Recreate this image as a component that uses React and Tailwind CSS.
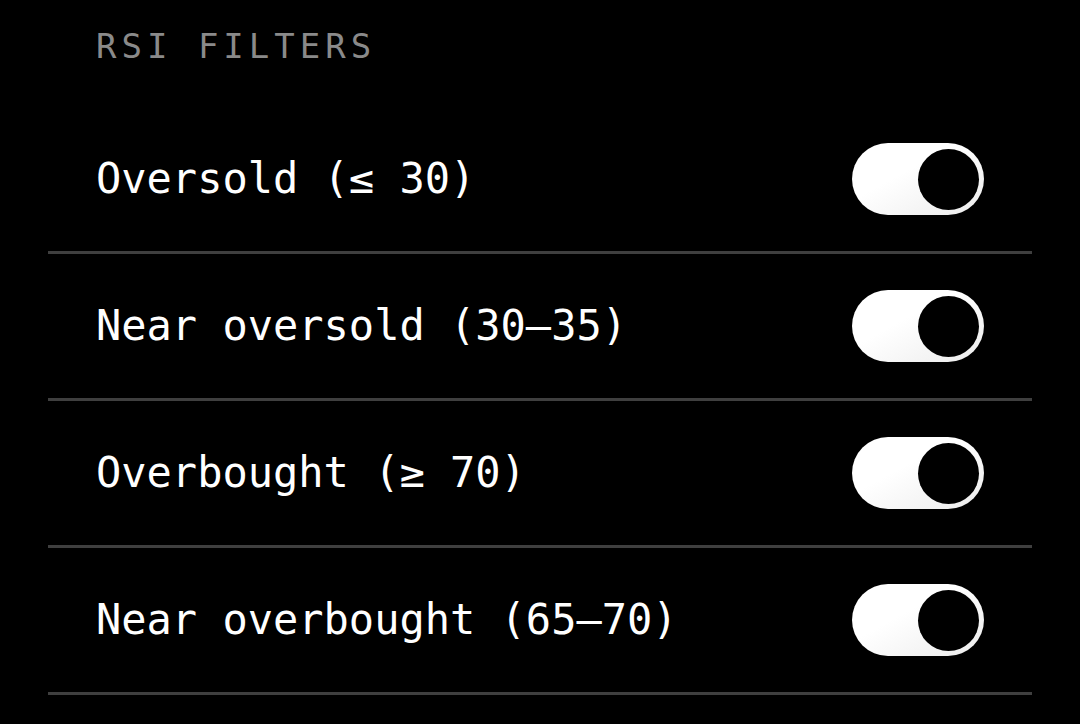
import React, { useState } from 'react';

const FILTERS = [
  { id: 'oversold', label: 'Oversold (≤ 30)' },
  { id: 'nearOversold', label: 'Near oversold (30–35)' },
  { id: 'overbought', label: 'Overbought (≥ 70)' },
  { id: 'nearOverbought', label: 'Near overbought (65–70)' },
];

// Switch: white pill, black knob resting on the right when on
function Toggle({ on, onChange }) {
  return (
    <button
      type="button"
      role="switch"
      aria-checked={on}
      onClick={onChange}
      className={`relative w-[132px] h-[72px] rounded-full shrink-0 ${
        on ? 'bg-gradient-to-br from-white from-40% to-[#ececec]' : 'bg-[#3a3a3a]'
      }`}
    >
      <span
        className={`absolute top-[5.5px] w-[61px] h-[61px] rounded-full bg-black ${
          on ? 'right-[5px]' : 'left-[5px]'
        }`}
      />
    </button>
  );
}

export default function App() {
  const [state, setState] = useState({
    oversold: true,
    nearOversold: true,
    overbought: true,
    nearOverbought: true,
  });

  const flip = (id) => () => setState((s) => ({ ...s, [id]: !s[id] }));

  return (
    <div className="min-h-[724px] w-full bg-black px-12 font-['DejaVu_Sans_Mono',monospace]">
      <h2 className="pl-12 pt-[29px] pb-[44px] text-[34px] leading-[34px] tracking-[5px] text-[#8a8a8a] font-normal">
        RSI FILTERS
      </h2>
      {FILTERS.map((f) => (
        <div
          key={f.id}
          className="flex items-center justify-between h-[147px] px-12 border-b-[3px] border-[#3f3f3f]"
        >
          <span className="text-[42px] leading-none text-white">{f.label}</span>
          <Toggle on={state[f.id]} onChange={flip(f.id)} />
        </div>
      ))}
    </div>
  );
}
